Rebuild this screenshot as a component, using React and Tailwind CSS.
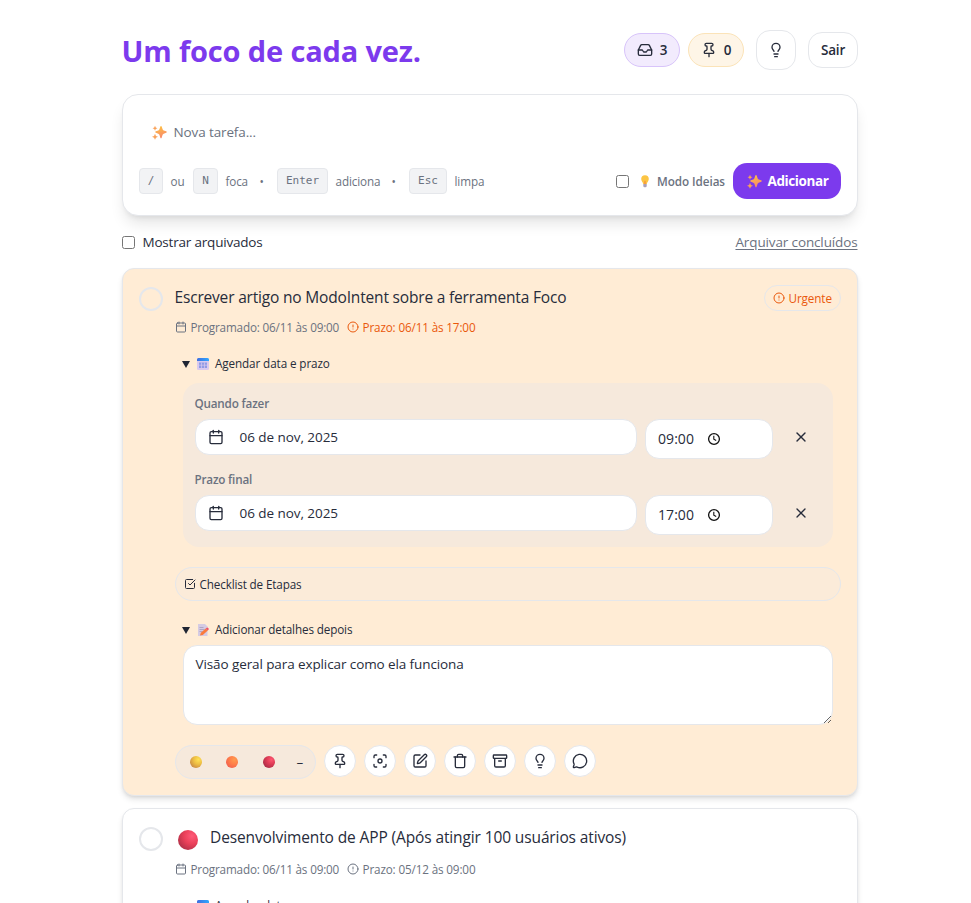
import React from "react";
import { Inbox, Pin, Lightbulb, Calendar, CircleAlert, X, SquareCheckBig, Focus, SquarePen, Trash, Archive, MessageCircle } from "lucide-react";

function Sparkles({ className }) {
  return (
    <svg viewBox="0 0 16 16" className={className}>
      <defs>
        <linearGradient id="spark" x1="0" y1="0" x2="0.3" y2="1">
          <stop offset="0" stopColor="#ffc83d" />
          <stop offset="1" stopColor="#f88a6b" />
        </linearGradient>
      </defs>
      <path fill="url(#spark)" d="M9.6 1c.4 0 .6.2.7.6l1 3c.2.6.6 1 1.200 1.200l2.600.9c.8.3.8 1.300 0 1.600l-2.600.9c-.6.2-1 .6-1.200 1.200l-1 3.200c-.2.8-1.200.8-1.400 0l-1-3.200c-.2-.6-.6-1-1.200-1.200l-2.600-.9c-.8-.3-.8-1.300 0-1.600l2.600-.9c.6-.2 1-.6 1.200-1.200l1-3c.1-.4.3-.6.700-.6z" />
      <path fill="#f9a25a" d="M3.200.8l.8 1.800 1.800.8-1.800.8-.8 1.800-.8-1.800L.6 3.400l1.800-.8zM3.200 9.400l1 2.200 2.200 1-2.200 1-1 2.200-1-2.200-2.200-1 2.200-1z" />
    </svg>
  );
}

function BulbEmoji() {
  return (
    <svg viewBox="0 0 12 14" className="h-3.5 w-3">
      <path d="M6 1.200a3.800 3.800 0 0 0-3.800 3.800c0 2 1.500 2.900 2 5h3.600c.5-2.100 2-3 2-5A3.800 3.800 0 0 0 6 1.200z" fill="#fcc544" />
      <path d="M5 6.500 6 7.500l1-1V10H5z" fill="#f9a03c" />
      <path d="M4.300 10h3.400v2a1.300 1.300 0 0 1-1.300 1.200h-.8A1.300 1.300 0 0 1 4.300 12z" fill="#a9a0b8" />
    </svg>
  );
}

function CalendarEmoji() {
  return (
    <svg viewBox="0 0 12 12" className="h-3 w-3">
      <defs>
        <linearGradient id="calTop" x1="0" x2="1">
          <stop offset="0" stopColor="#3f6fe0" />
          <stop offset="1" stopColor="#2fa8ff" />
        </linearGradient>
      </defs>
      <rect x="0" y="0" width="12" height="12" rx="1.500" fill="#d9c9ee" />
      <path d="M0 3V1.500A1.500 1.500 0 0 1 1.500 0h9A1.500 1.500 0 0 1 12 1.500V3z" fill="url(#calTop)" />
      <rect x="2" y="4.500" width="8" height="5.500" fill="#8f9be6" />
      <path d="M4.500 4.500v5.500M7.500 4.500v5.500M2 7.200h8" stroke="#d9c9ee" strokeWidth=".7" />
    </svg>
  );
}

function MemoEmoji() {
  return (
    <svg viewBox="0 0 12 12" className="h-3 w-3">
      <path d="M1 0h7l2.500 2.500V12H1z" fill="#d5cbe3" />
      <path d="M2.500 3.500h4M2.500 5.500h5M2.500 7.500h3" stroke="#a79abb" strokeWidth=".8" />
      <path d="M3 11.600l.8-2.800 5-4.300 2 2.100-5 4.300z" fill="#fb7b3c" />
      <path d="M8.800 4.500l1-.8c.8-.6 2.400 1 1.800 1.900l-.8 1z" fill="#f0506a" />
    </svg>
  );
}

function Ball({ id, from, mid, to, className }) {
  return (
    <svg viewBox="0 0 20 20" className={className}>
      <defs>
        <radialGradient id={id} cx=".7" cy=".3" r=".8">
          <stop offset="0" stopColor={from} />
          <stop offset=".5" stopColor={mid} />
          <stop offset="1" stopColor={to} />
        </radialGradient>
      </defs>
      <circle cx="10" cy="10" r="10" fill={`url(#${id})`} />
    </svg>
  );
}

function ClockIcon() {
  return (
    <svg viewBox="0 0 14 14" className="h-3.5 w-3.5" fill="none" stroke="#111" strokeWidth="1.300">
      <circle cx="7" cy="7" r="5.400" />
      <path d="M6.800 3.800v3.400l2.400 1.300" strokeWidth="1.100" />
    </svg>
  );
}

function Kbd({ className, children }) {
  return (
    <kbd className={`flex h-[26px] items-center justify-center rounded border border-[#e5e7eb] bg-[#f2f3f5] pl-px pt-px font-['DejaVu_Sans_Mono',monospace] text-[11px] text-[#6b7280] ${className}`}>
      {children}
    </kbd>
  );
}

function Box({ className }) {
  return <span className={`block h-[13px] w-[13px] shrink-0 rounded-[2.5px] border border-[#767676] bg-white ${className || ""}`} />;
}

function ScheduleRow({ label, labelClass, time }) {
  return (
    <div className="h-[76px]">
      <div className={`flex h-4 items-center text-[11.7px] font-semibold text-[#6b7280] ${labelClass}`}>{label}</div>
      <div className="mt-[7px] flex items-start">
        <div className="flex h-9 w-[442px] items-center rounded-[14px] border border-[#e5e7eb] bg-white pl-3">
          <Calendar size={16} />
          <span className="ml-4 text-[13.5px] tracking-[-0.055px]">06 de nov, 2025</span>
        </div>
        <div className="ml-2 flex h-10 w-32 items-center rounded-[14px] border border-[#e5e7eb] bg-white pl-[12.5px]">
          <span className="pb-[2px] text-[14px] tracking-[0.06px]">{time}</span>
          <span className="ml-[12.5px]"><ClockIcon /></span>
        </div>
        <div className="ml-5 flex h-9 w-4 items-center justify-center">
          <X size={16} />
        </div>
      </div>
    </div>
  );
}

function Meta({ deadline, deadlineClass }) {
  return (
    <div className="flex h-4 items-center text-[11.7px] text-[#6b7280]">
      <Calendar size={12} />
      <span className="ml-1 w-[149px] whitespace-nowrap pt-[2px] tracking-[-0.17px]">Programado: 06/11 às 09:00</span>
      <span className={`ml-[7px] flex items-center ${deadlineClass}`}>
        <CircleAlert size={12} />
        <span className="ml-1 whitespace-nowrap pt-[2px] tracking-[-0.14px]">{deadline}</span>
      </span>
    </div>
  );
}

function Summary({ icon, text, textClass }) {
  return (
    <div className="flex h-4 items-center pl-[7.5px] text-[11.7px]">
      <svg viewBox="0 0 8 7" className="h-[7px] w-2"><path d="M0 0h8L4 7z" fill="#1f2533" /></svg>
      <span className="ml-[6.5px] mr-[6.5px]">{icon}</span>
      <span className={textClass}>{text}</span>
    </div>
  );
}

const actions = [Pin, Focus, SquarePen, Trash, Archive, Lightbulb, MessageCircle];

export default function App() {
  return (
    <div className="h-[903px] w-[971px] overflow-hidden bg-white font-['Open_Sans','Noto_Sans',sans-serif] text-[#272c3b]">
      <div className="ml-[121.5px] w-[736px] pt-[30px]">
        <header className="flex h-10 items-center">
          <h1 className="text-[29px] font-bold tracking-[-0.15px] text-[#7c3aed]">
            <span className="relative top-[1px]">Um foco de cada vez.</span>
          </h1>
          <div className="ml-auto flex items-center text-[13.5px] font-semibold">
            <div className="flex h-[34px] w-14 items-center justify-center gap-[7px] rounded-full border border-[#d8c4fa] bg-[#f2ebfd] pl-px">
              <Inbox size={16} />
              <span>3</span>
            </div>
            <div className="ml-2 flex h-[34px] w-14 items-center justify-center gap-[7px] rounded-full border border-[#fbe3b8] bg-[#fef5e7] pl-px">
              <Pin size={16} />
              <span>0</span>
            </div>
            <div className="ml-3 flex h-10 w-10 items-center justify-center rounded-[14px] border border-[#e5e7eb]">
              <Lightbulb size={16} />
            </div>
            <div className="ml-3 flex h-9 w-[50px] items-center justify-center rounded-[14px] border border-[#e5e7eb] pl-px tracking-[-0.2px]">Sair</div>
          </div>
        </header>

        <section className="mt-6 h-[122px] rounded-2xl border border-[#e5e7eb] bg-white px-4 pt-4 shadow-[0_10px_15px_-3px_rgba(0,0,0,0.11),0_4px_6px_-4px_rgba(0,0,0,0.11)]">
          <div className="flex h-[42px] items-center pl-[13px] text-[13.5px] text-[#6b7280]">
            <Sparkles className="h-[15px] w-[15px]" />
            <span className="ml-[7px] tracking-[-0.12px]">Nova tarefa...</span>
          </div>
          <div className="mt-[10px] flex h-9 items-center text-[11.7px] text-[#6b7280]">
            <Kbd className="w-6">/</Kbd>
            <span className="ml-2 w-[22px] pt-[2px]">ou</span>
            <Kbd className="w-[25px]">N</Kbd>
            <span className="ml-2 w-[34px] pt-[2px] tracking-[-0.15px]">foca</span>
            <span className="w-[17px] pt-[2px]">•</span>
            <Kbd className="w-[51px]">Enter</Kbd>
            <span className="ml-2 w-[56px] pt-[2px] tracking-[-0.11px]">adiciona</span>
            <span className="w-[17px] pt-[2px]">•</span>
            <Kbd className="w-[38px]">Esc</Kbd>
            <span className="ml-2 pt-[2px] tracking-[-0.08px]">limpa</span>
            <span className="ml-auto flex items-center">
              <Box className="mt-px" />
              <span className="ml-[10px] pt-px"><BulbEmoji /></span>
              <span className="ml-[6.5px] w-[75.5px] whitespace-nowrap pt-[2px] font-semibold tracking-[-0.06px]">Modo Ideias</span>
            </span>
            <div className="flex h-9 w-[108px] items-center rounded-[14px] bg-[#7c3aed] pl-[14px] text-[13.5px] font-bold text-white">
              <Sparkles className="h-[15px] w-[15px]" />
              <span className="ml-[6px] tracking-[-0.4px]">Adicionar</span>
            </div>
          </div>
        </section>

        <div className="mt-4 flex h-[20px] items-center text-[13.5px]">
          <Box />
          <span className="ml-2 tracking-[-0.2px]">Mostrar arquivados</span>
          <span className="ml-auto tracking-[-0.13px] text-[#6b7280] underline underline-offset-2">Arquivar concluídos</span>
        </div>

        <article className="mt-4 flex h-[528px] rounded-xl border border-[#e5e7eb] bg-[#ffecd5] p-4 shadow-[0_4px_6px_-1px_rgba(0,0,0,0.12),0_2px_4px_-2px_rgba(0,0,0,0.12)]">
          <div className="mt-[2px] h-6 w-6 shrink-0 rounded-full border-2 border-[#e5e7eb]" />
          <div className="ml-3 w-[666px]">
            <div className="flex h-[26px] items-center">
              <h2 className="text-[15.5px] tracking-[-0.18px]">Escrever artigo no ModoIntent sobre a ferramenta Foco</h2>
              <span className="ml-auto flex h-[26px] w-[77px] items-center rounded-full border border-[#e5e7eb] pl-2 text-[11.7px] text-[#ea580c]">
                <CircleAlert size={12} />
                <span className="ml-1 pt-[2px] tracking-[-0.1px]">Urgente</span>
              </span>
            </div>
            <div className="mt-2">
              <Meta deadline="Prazo: 06/11 às 17:00" deadlineClass="text-[#ea580c]" />
            </div>
            <div className="mt-[21px]">
              <Summary icon={<CalendarEmoji />} text="Agendar data e prazo" textClass="tracking-[-0.1px]" />
            </div>
            <div className="ml-2 mt-[11px] h-[164px] w-[650px] rounded-2xl bg-[#f6e9dc] pl-3 pt-[13px]">
              <ScheduleRow label="Quando fazer" labelClass="tracking-[-0.18px]" time="09:00" />
              <ScheduleRow label="Prazo final" labelClass="tracking-[-0.2px]" time="17:00" />
            </div>
            <div className="mt-5 flex h-[34px] items-center rounded-full border border-[#e5e7eb] bg-[#fbebd9] pl-2 text-[11.7px]">
              <SquareCheckBig size={12} />
              <span className="ml-1 pt-[2px] tracking-[-0.14px]">Checklist de Etapas</span>
            </div>
            <div className="mt-[21px]">
              <Summary icon={<MemoEmoji />} text="Adicionar detalhes depois" textClass="tracking-[-0.13px]" />
            </div>
            <textarea
              className="ml-2 mt-[7px] block h-20 w-[650px] rounded-[14px] border border-[#e5e7eb] bg-white px-3 py-2 text-[13.5px] leading-5 tracking-[-0.1px]"
              defaultValue="Visão geral para explicar como ela funciona"
            />
            <div className="mt-5 flex items-start gap-2">
              <div className="flex h-[34px] w-[141px] items-center rounded-full border border-[#e5e7eb] bg-[#f6e9dc] pl-[14px] text-[13.5px]">
                <Ball id="yellow" from="#ffe254" mid="#edbd43" to="#c98a45" className="h-3 w-3" />
                <Ball id="orange" from="#ff9a4d" mid="#ff7f49" to="#f2604f" className="ml-6 h-3 w-3" />
                <Ball id="redSmall" from="#ff5670" mid="#dc3a54" to="#a82c46" className="ml-[25px] h-3 w-3" />
                <span className="ml-[22px]">–</span>
              </div>
              {actions.map((Icon, i) => (
                <div key={i} className="flex h-8 w-8 items-center justify-center rounded-full border border-[#e5e7eb] bg-white">
                  <Icon size={16} />
                </div>
              ))}
            </div>
          </div>
        </article>

        <article className="mt-3 flex h-[300px] rounded-xl border border-[#e5e7eb] bg-white p-4 shadow-[0_4px_6px_-1px_rgba(0,0,0,0.12),0_2px_4px_-2px_rgba(0,0,0,0.12)]">
          <div className="mt-[2px] h-6 w-6 shrink-0 rounded-full border-2 border-[#e5e7eb]" />
          <div className="ml-3 w-[666px]">
            <div className="flex h-[28px] items-center">
              <Ball id="redLarge" from="#ff5a78" mid="#ea4059" to="#b03048" className="ml-[3px] mt-[2px] h-5 w-5" />
              <h2 className="mb-[2px] ml-[12.5px] text-[15.5px] tracking-[-0.12px]">Desenvolvimento de APP (Após atingir 100 usuários ativos)</h2>
            </div>
            <div className="mt-2">
              <Meta deadline="Prazo: 05/12 às 09:00" deadlineClass="" />
            </div>
            <div className="mt-[21px]">
              <Summary icon={<CalendarEmoji />} text="Agendar data e prazo" textClass="tracking-[-0.1px]" />
            </div>
          </div>
        </article>
      </div>
    </div>
  );
}
